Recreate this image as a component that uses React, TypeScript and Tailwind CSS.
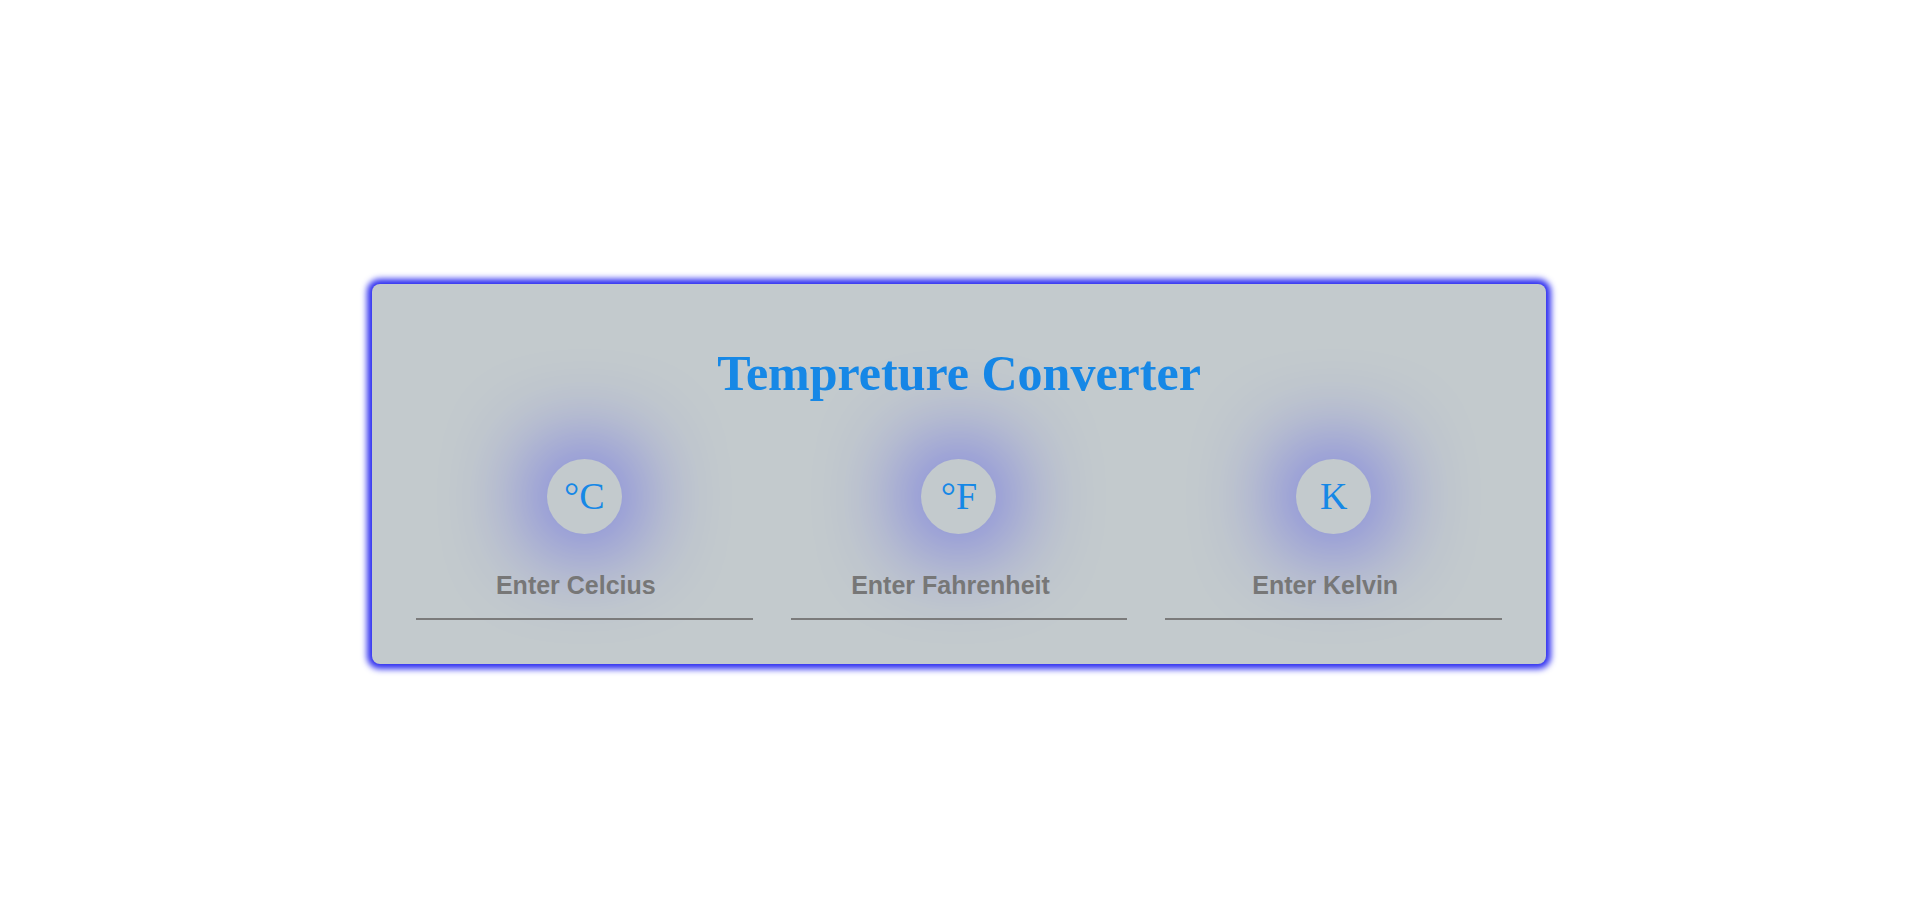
import { useState } from 'react';

interface Scale {
  key: string;
  symbol: string;
  placeholder: string;
}

const scales: Scale[] = [
  { key: 'c', symbol: '°C', placeholder: 'Enter Celcius' },
  { key: 'f', symbol: '°F', placeholder: 'Enter Fahrenheit' },
  { key: 'k', symbol: 'K', placeholder: 'Enter Kelvin' },
];

export default function App() {
  const [values, setValues] = useState<Record<string, string>>({ c: '', f: '', k: '' });

  return (
    <div className="min-h-[920px] bg-white pt-[284px]">
      <div className="mx-auto w-[1174px] rounded-lg bg-[#c3cacd] px-[44px] pt-[60px] pb-[44px] shadow-[0_0_6px_5px_#3030f0]">
        <h1 className="text-center font-['Liberation_Serif',serif] text-[50px] font-bold leading-[58px] text-[#1688e6]">
          Tempreture Converter
        </h1>
        <div className="mt-[57px] grid grid-cols-3 gap-[38px]">
          {scales.map((s) => (
            <div key={s.key} className="flex flex-col items-center">
              <div className="flex h-[75px] w-[75px] items-center justify-center rounded-full bg-[#c3cacd] font-['Liberation_Serif',serif] text-[38px] text-[#1688e6] shadow-[0_0_100px_#0000ff]">
                {s.symbol}
              </div>
              <input
                value={values[s.key]}
                onChange={(e) => setValues({ ...values, [s.key]: e.target.value })}
                placeholder={s.placeholder}
                className="mt-[36px] box-border h-[50px] w-full border-b-2 border-[#7b7b7b] bg-transparent pr-[17px] pb-[18px] text-center font-['Liberation_Sans',Arial,sans-serif] text-[25px] font-bold text-[#777] outline-none placeholder:text-[#777]"
              />
            </div>
          ))}
        </div>
      </div>
    </div>
  );
}
